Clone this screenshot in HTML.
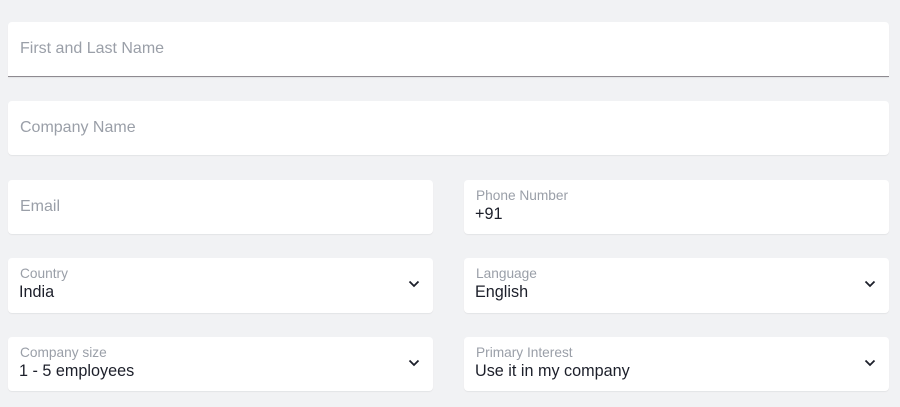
<!DOCTYPE html>
<html><head><style>
body{margin:0;width:900px;height:407px;background:#f1f2f4;font-family:"Liberation Sans",sans-serif;position:relative;overflow:hidden}
.b{position:absolute;background:#fff;border-radius:4px;box-shadow:0 1px 1px rgba(0,0,0,0.06)}
.ph{position:absolute;left:12px;top:18px;font-size:16px;color:#9a9fa8}
.lb{position:absolute;left:12px;top:8px;font-size:13.7px;color:#9a9fa8}
.v{position:absolute;left:11px;top:25px;font-size:16.2px;color:#1c1f2a}
.ch{position:absolute;right:13px;top:22px;width:12px;height:8px}
</style></head><body>
<div class="b" style="left:8px;top:22px;width:881px;height:55px;border-radius:4px 4px 0 0;border-bottom:1px solid #8e8a90;box-sizing:border-box"><div class="ph">First and Last Name</div></div>
<div class="b" style="left:8px;top:101px;width:881px;height:54px"><div class="ph">Company Name</div></div>
<div class="b" style="left:8px;top:180px;width:425px;height:54px"><div class="ph">Email</div></div>
<div class="b" style="left:464px;top:180px;width:425px;height:54px"><div class="lb">Phone Number</div><div class="v">+91</div></div>
<div class="b" style="left:8px;top:258px;width:425px;height:55px"><div class="lb">Country</div><div class="v">India</div><svg class="ch" viewBox="0 0 12 8"><path d="M1.5 1.5L6 6L10.5 1.5" fill="none" stroke="#1c1f2a" stroke-width="1.8"/></svg></div>
<div class="b" style="left:464px;top:258px;width:425px;height:55px"><div class="lb">Language</div><div class="v">English</div><svg class="ch" viewBox="0 0 12 8"><path d="M1.5 1.5L6 6L10.5 1.5" fill="none" stroke="#1c1f2a" stroke-width="1.8"/></svg></div>
<div class="b" style="left:8px;top:337px;width:425px;height:54px"><div class="lb">Company size</div><div class="v">1 - 5 employees</div><svg class="ch" viewBox="0 0 12 8"><path d="M1.5 1.5L6 6L10.5 1.5" fill="none" stroke="#1c1f2a" stroke-width="1.8"/></svg></div>
<div class="b" style="left:464px;top:337px;width:425px;height:54px"><div class="lb">Primary Interest</div><div class="v">Use it in my company</div><svg class="ch" viewBox="0 0 12 8"><path d="M1.5 1.5L6 6L10.5 1.5" fill="none" stroke="#1c1f2a" stroke-width="1.8"/></svg></div>
</body></html>
